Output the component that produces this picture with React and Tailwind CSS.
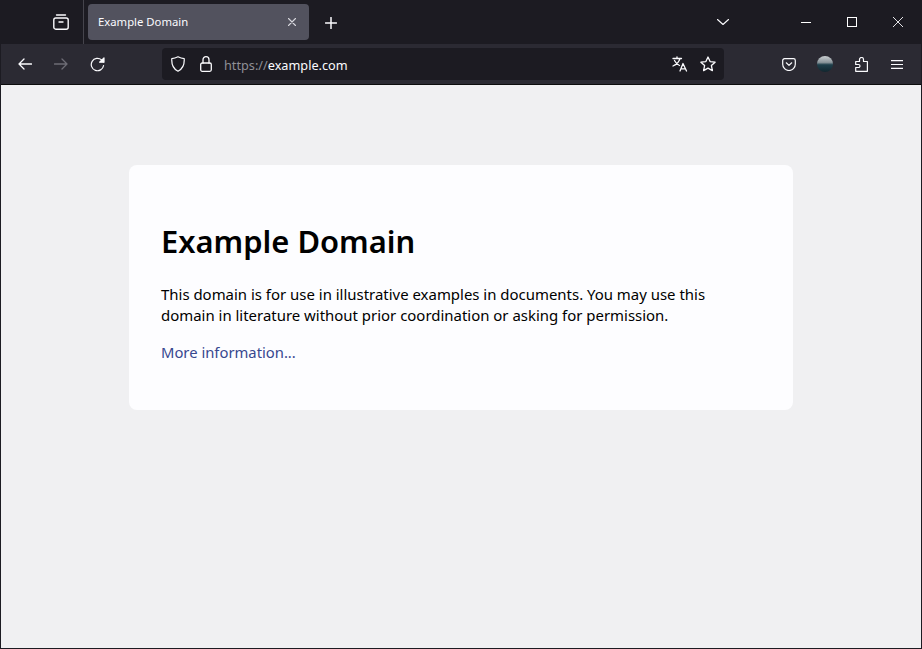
import React from "react";

const S = ({ className = "w-4 h-4", children, sw = 1.4, vb = "0 0 16 16" }) => (
  <svg viewBox={vb} className={className} fill="none" stroke="currentColor" strokeWidth={sw} strokeLinecap="round" strokeLinejoin="round">
    {children}
  </svg>
);

export default function App() {
  return (
    <div className="w-[922px] h-[649px] overflow-hidden flex flex-col border border-[#1c1b22] border-t-0 bg-[#f0f0f2] font-['Noto_Sans',sans-serif]">
      {/* Tab strip */}
      <div className="h-[44px] shrink-0 flex items-center bg-[#1c1b22] text-[#fbfbfe]">
        <div className="w-[83px] h-full shrink-0 flex items-center justify-end pr-[14px] border-r border-[#45444c]">
          <S className="w-4 h-4">
            <path d="M3.5 1h9" />
            <rect x="0.8" y="4" width="14.4" height="11.2" rx="2" />
            <path d="M6 8h4" />
          </S>
        </div>
        <div className="ml-[4px] w-[221px] h-[36px] shrink-0 rounded-[4px] bg-[#52525e] flex items-center pl-[10px] pr-[13px]">
          <span className="text-[11.3px] flex-1 whitespace-nowrap">Example Domain</span>
          <S className="w-[8px] h-[8px] text-[#d8d8de]" sw={1.1} vb="0 0 8 8"><path d="M0.5 0.5l7 7M7.5 0.5l-7 7" /></S>
        </div>
        <div className="ml-[16px] mt-[2px] shrink-0">
          <S className="w-[12px] h-[12px]" sw={1.5} vb="0 0 12 12"><path d="M6 0.5v11M0.5 6h11" /></S>
        </div>
        <div className="ml-auto flex items-center h-full">
          <S className="w-[12px] h-[6px] mr-[72px]" sw={1.1} vb="0 0 12 6"><path d="M0.5 0.5L6 5.5l5.5-5" /></S>
          <div className="w-[10px] h-px bg-white mr-[36px]" />
          <div className="w-[10px] h-[10px] border border-white mr-[36px]" />
          <S className="w-[10px] h-[10px] mr-[18px]" sw={0.9} vb="0 0 10 10"><path d="M0 0l10 10M10 0L0 10" /></S>
        </div>
      </div>
      {/* Toolbar */}
      <div className="h-[40px] shrink-0 flex items-center bg-[#2b2a33] text-[#fbfbfe]">
        <div className="w-[160px] flex items-center shrink-0 pl-[17px]">
          <S className="w-[14px] h-[12px]" sw={1.3} vb="0 0 14 12"><path d="M13.5 6H1M6 1L1 6l5 5" /></S>
          <S className="w-[14px] h-[12px] ml-[22px] text-[#6d6c75]" sw={1.3} vb="0 0 14 12"><path d="M0.5 6H13M8 1l5 5-5 5" /></S>
          <S className="w-[15px] h-[15px] ml-[22px]" sw={1.2} vb="0 0 15 15"><path d="M13.6 8.5a6.2 6.2 0 1 1-2-5.6L13.5 4.8" /><path d="M14 0.8v4.4H9.6z" fill="currentColor" /></S>
        </div>
        <div className="ml-[1px] w-[562px] h-[32px] shrink-0 rounded-[4px] bg-[#1c1b22] flex items-center pl-[9px]">
          <S className="w-[14px] h-[16px]" sw={1.2} vb="0 0 14 16"><path d="M7 0.8c2 1 3.8 1.6 6.2 1.8.4 6-1.2 10.2-6.2 12.6C2 12.8.4 8.6.8 2.6 3.2 2.4 5 1.8 7 .8z" /></S>
          <S className="w-[12px] h-[16px] ml-[15px]" sw={1.3} vb="0 0 12 16"><rect x="0.7" y="7" width="10.6" height="8.3" rx="1.5" /><path d="M3 7V3.7a3 3 0 0 1 6 0V7" /></S>
          <span className="ml-[12px] mt-[4px] text-[12.7px] whitespace-nowrap"><span className="text-[#8f8f96]">https://</span>example.com</span>
          <div className="ml-auto flex items-center pr-[8px] gap-[12px]">
            <S className="w-[16px] h-[16px]" sw={1.3}>
              <path d="M1 2.5h8.5M5 .8v1.7M8 2.5C7 6 4.5 8.500 1 10M2.5 4.5C4 7.5 6 9 7.5 9.5" />
              <path d="M8 15l3-7.5L14.5 15M9 12.8h4.5" />
            </S>
            <S className="w-[16px] h-[16px]" sw={1.3}><path d="M8 1l2.1 4.6 5 .6-3.7 3.4 1 5L8 12.1l-4.400 2.500 1-5L.9 6.2l5-.6z" /></S>
          </div>
        </div>
        <div className="ml-auto flex items-center pr-[18px]">
          <S className="w-[14px] h-[13px]" sw={1.2} vb="0 0 14 13"><path d="M2.5.7h9a1.800 1.800 0 0 1 1.800 1.800V6.200a6.300 6.300 0 0 1-12.600 0V2.500A1.800 1.800 0 0 1 2.500.7z" /><path d="M4.300 4.800L7 7.400l2.700-2.600" /></S>
          <div className="w-[16px] h-[16px] ml-[21px] rounded-full bg-[linear-gradient(#c9cdd0_0%,#8a959b_40%,#1e3f4b_55%,#12262f_100%)]" />
          <S className="w-[13px] h-[15px] ml-[22px]" sw={1.2} vb="0 0 13 15"><path d="M4.500 3V2.500a2 2 0 0 1 4 0V4.500H12.400v9.800H.7V10.500H3.500a1.300 1.300 0 0 0 0-3H.7V4.500h3.800z" /></S>
          <S className="w-[12px] h-[9px] ml-[23px]" sw={1.1} vb="0 0 12 9"><path d="M0 .6h12M0 4.500h12M0 8.400h12" /></S>
        </div>
      </div>
      <div className="h-px bg-[#0c0c0d] shrink-0" />
      {/* Page */}
      <div className="flex-1 bg-[#f0f0f2] pt-[80px] pl-[128px]">
        <div className="w-[664px] h-[245px] bg-[#fdfdff] rounded-[8px] p-[32px] text-black text-[14.95px] leading-[21px]">
          <h1 className="text-[30.9px] font-semibold leading-[43px] mt-[23px]">Example Domain</h1>
          <p className="mt-[21px]">This domain is for use in illustrative examples in documents. You may use this domain in literature without prior coordination or asking for permission.</p>
          <p className="mt-[16px]"><a href="#" className="text-[#38488f] text-[14.8px]">More information...</a></p>
        </div>
      </div>
    </div>
  );
}
